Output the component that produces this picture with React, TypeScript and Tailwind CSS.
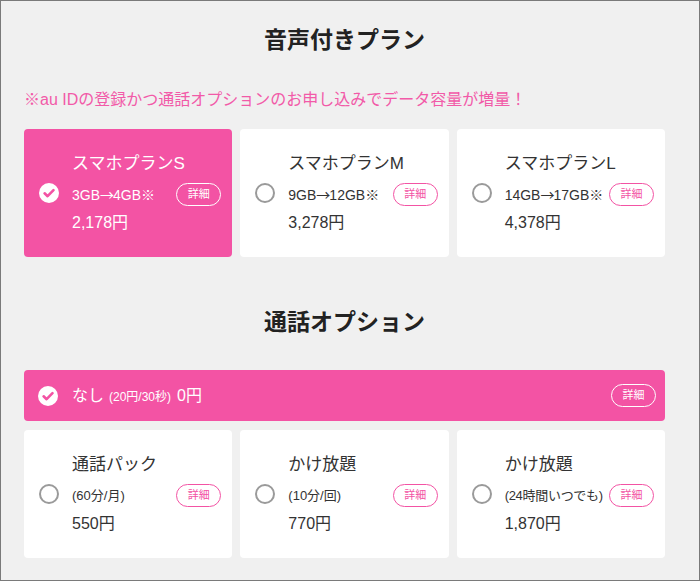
import React from "react";

const PINK = "bg-[#f353a4]";

function CheckIcon() {
  return (
    <svg width="20" height="20" viewBox="0 0 20 20" className="shrink-0">
      <circle cx="10" cy="10" r="10" fill="#ffffff" />
      <path d="M5.6 10.3 L8.6 13.2 L14.5 7.2" stroke="#f353a4" strokeWidth="2.6" fill="none" strokeLinecap="round" strokeLinejoin="round" />
    </svg>
  );
}

function Radio() {
  return <div className="w-[20px] h-[20px] shrink-0 rounded-full border-2 border-[#9a9a9a] bg-white" />;
}

function DetailBtn({ active }: { active: boolean }) {
  return (
    <div
      className={
        active
          ? "shrink-0 w-[45px] h-[23px] rounded-full border border-white text-white text-[11px] flex items-center justify-center"
          : "shrink-0 w-[45px] h-[23px] rounded-full border border-[#f353a4] text-[#f353a4] bg-white text-[11px] flex items-center justify-center"
      }
    >
      詳細
    </div>
  );
}

type CardProps = { title: string; sub: React.ReactNode; price: string; active?: boolean; subSize?: string };

function Card({ title, sub, price, active = false, subSize = "text-[14px]" }: CardProps) {
  return (
    <div
      className={
        (active ? PINK + " text-white" : "bg-white text-[#333]") +
        " h-[128px] rounded-[4px] flex items-center pl-[15px] pr-[11px] gap-[13px]"
      }
    >
      {active ? <CheckIcon /> : <Radio />}
      <div className="flex-1 flex flex-col">
        <div className="text-[17px] leading-[24px] whitespace-nowrap">{title}</div>
        <div className="mt-[7px] h-[23px] flex items-center justify-between">
          <span className={subSize + " whitespace-nowrap"}>{sub}</span>
          <DetailBtn active={active} />
        </div>
        <div className="mt-[6px] text-[16px] leading-[22px]">{price}</div>
      </div>
    </div>
  );
}

function Gb({ a, b }: { a: string; b: string }) {
  return (
    <>
      {a}
      <span className="font-['Noto_Sans_CJK_JP'] tracking-[-1px]">→</span>
      {b}
      <span className="font-['Noto_Sans_CJK_JP']">※</span>
    </>
  );
}

export default function App() {
  return (
    <div
      className="w-[700px] h-[581px] border border-[#7a7a7a] bg-[#f0f0f0] pl-[23px] pt-[23px] overflow-hidden"
      style={{ fontFamily: '"Liberation Sans", "Noto Sans CJK JP", sans-serif' }}
    >
      <div className="w-[641px] flex flex-col">
        <h2 className="text-[23px] leading-[32px] font-bold text-[#222] text-center">音声付きプラン</h2>
        <p className="mt-[32px] text-[16px] leading-[24px] text-[#f25aa8]">
          ※au IDの登録かつ通話オプションのお申し込みでデータ容量が増量！
        </p>
        <div className="mt-[17px] grid grid-cols-3 gap-[8px]">
          <Card title="スマホプランS" sub={<Gb a="3GB" b="4GB" />} price="2,178円" active />
          <Card title="スマホプランM" sub={<Gb a="9GB" b="12GB" />} price="3,278円" />
          <Card title="スマホプランL" sub={<Gb a="14GB" b="17GB" />} price="4,378円" />
        </div>
        <h2 className="mt-[49px] text-[23px] leading-[32px] font-bold text-[#222] text-center">通話オプション</h2>
        <div className={"mt-[32px] h-[51px] rounded-[4px] " + PINK + " text-white flex items-center pl-[38px] pr-[9px]"}>
          <div className="-ml-[24px] mr-[14px]">
            <CheckIcon />
          </div>
          <div className="flex-1 flex items-baseline">
            <span className="text-[16px]">なし</span>
            <span className="text-[12px] ml-[5px]">(20円/30秒)</span>
            <span className="text-[16px] ml-[6px]">0円</span>
          </div>
          <DetailBtn active />
        </div>
        <div className="mt-[9px] grid grid-cols-3 gap-[8px]">
          <Card title="通話パック" sub="(60分/月)" price="550円" subSize="text-[13px]" />
          <Card title="かけ放題" sub="(10分/回)" price="770円" subSize="text-[13px]" />
          <Card title="かけ放題" sub="(24時間いつでも)" price="1,870円" subSize="text-[13px] tracking-[-0.3px]" />
        </div>
      </div>
    </div>
  );
}
